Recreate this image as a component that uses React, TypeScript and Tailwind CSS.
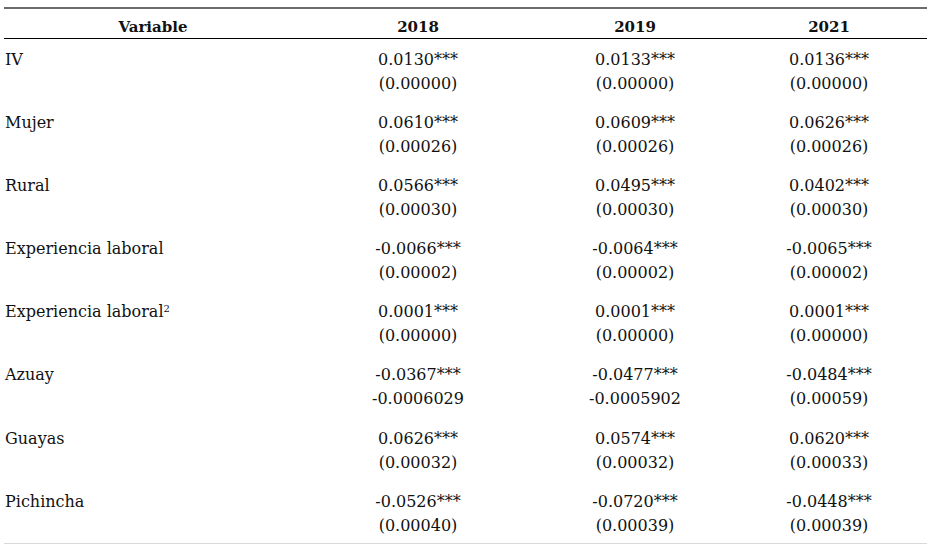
import React from "react";

type Row = {
  name: React.ReactNode;
  values: [string, string][];
};

const rows: Row[] = [
  { name: "IV", values: [["0.0130***", "(0.00000)"], ["0.0133***", "(0.00000)"], ["0.0136***", "(0.00000)"]] },
  { name: "Mujer", values: [["0.0610***", "(0.00026)"], ["0.0609***", "(0.00026)"], ["0.0626***", "(0.00026)"]] },
  { name: "Rural", values: [["0.0566***", "(0.00030)"], ["0.0495***", "(0.00030)"], ["0.0402***", "(0.00030)"]] },
  { name: "Experiencia laboral", values: [["-0.0066***", "(0.00002)"], ["-0.0064***", "(0.00002)"], ["-0.0065***", "(0.00002)"]] },
  {
    name: (
      <>
        Experiencia laboral<sup className="text-[10px]">2</sup>
      </>
    ),
    values: [["0.0001***", "(0.00000)"], ["0.0001***", "(0.00000)"], ["0.0001***", "(0.00000)"]],
  },
  { name: "Azuay", values: [["-0.0367***", "-0.0006029"], ["-0.0477***", "-0.0005902"], ["-0.0484***", "(0.00059)"]] },
  { name: "Guayas", values: [["0.0626***", "(0.00032)"], ["0.0574***", "(0.00032)"], ["0.0620***", "(0.00033)"]] },
  { name: "Pichincha", values: [["-0.0526***", "(0.00040)"], ["-0.0720***", "(0.00039)"], ["-0.0448***", "(0.00039)"]] },
];

const cols = "grid grid-cols-[298px_232px_202px_186px]";

export default function App() {
  return (
    <div className="min-h-screen bg-white pt-[7px] px-[4px] text-[#111] font-['DejaVu_Serif',serif]">
      <div className="w-[923px]">
        {/* Header */}
        <div className={`${cols} border-t-2 border-[#6b6b6b] border-b border-b-black h-[32px] pt-[6px] font-bold text-[15px] leading-[24px]`}>
          <div className="text-center">Variable</div>
          <div className="text-center">2018</div>
          <div className="text-center">2019</div>
          <div className="text-center">2021</div>
        </div>

        {/* Body */}
        {rows.map((row, i) => (
          <div
            key={i}
            className={`${cols} h-[63.1px] pt-[9px] text-[16px] leading-[24px] ${i === rows.length - 1 ? "border-b border-[#d9d9d9]" : ""}`}
          >
            <div className="pl-[1px]">{row.name}</div>
            {row.values.map((v, j) => (
              <div key={j} className="text-center">
                <div>{v[0]}</div>
                <div>{v[1]}</div>
              </div>
            ))}
          </div>
        ))}
      </div>
    </div>
  );
}
